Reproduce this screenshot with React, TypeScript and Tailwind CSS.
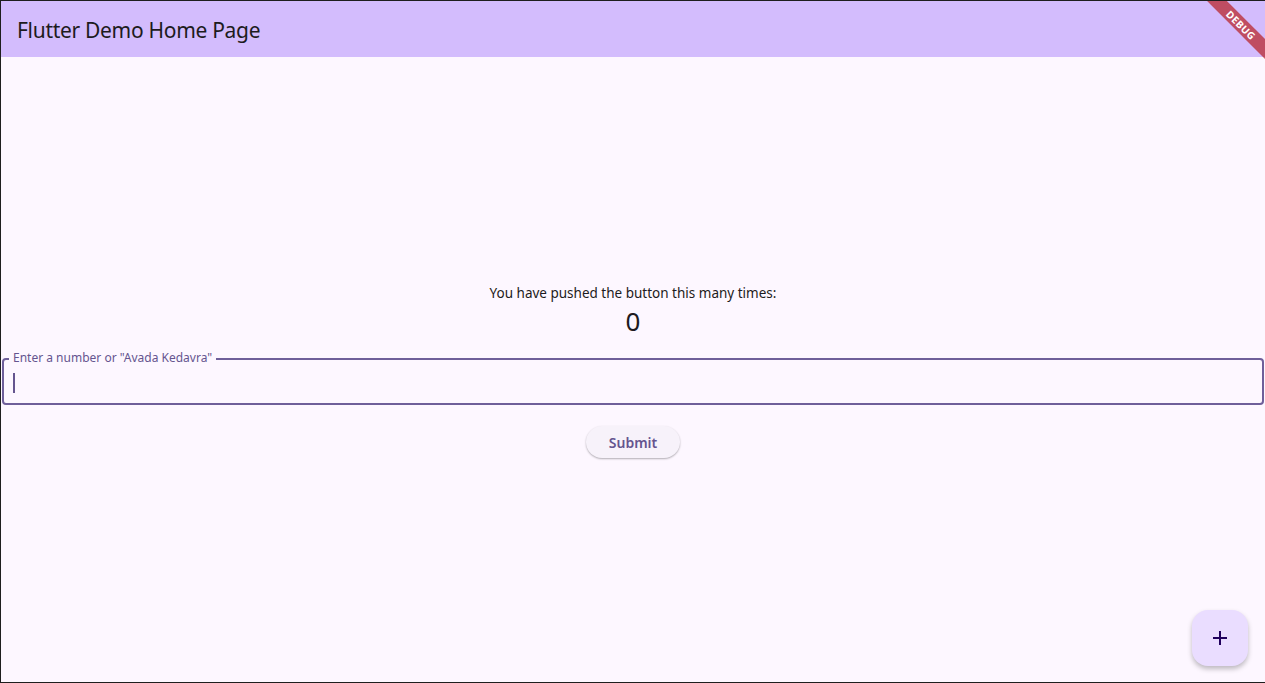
export default function App() {
  return (
    <main
      className="relative flex h-[683px] w-[1265px] flex-col overflow-hidden border-b border-l border-t border-[#1e1e1e] bg-[#fdf7ff]"
      style={{ fontFamily: '"Noto Sans", "Open Sans", sans-serif' }}
    >
      {/* App bar */}
      <header className="flex h-[56px] shrink-0 items-center bg-[#d3bcfd] px-4 pt-[3px]">
        <h1 className="text-[21px] leading-none tracking-[-0.3px] text-[#1d1b20]">Flutter Demo Home Page</h1>
      </header>

      {/* Debug banner */}
      <div className="pointer-events-none absolute right-0 top-0 h-[80px] w-[80px] overflow-hidden">
        <div className="absolute left-[2px] top-[17px] flex h-[14px] w-[108px] rotate-45 items-center justify-center bg-[#b71c1cb0]">
          <span className="text-[10px] font-bold leading-none tracking-[0.4px] text-white">DEBUG</span>
        </div>
      </div>

      {/* Body */}
      <section className="flex flex-1 flex-col items-center pt-[227px]">
        <p className="text-[13.5px] leading-[18px] text-[#1d1b20]">You have pushed the button this many times:</p>
        <p className="mt-[3px] text-[26px] leading-[32px] text-[#1d1b20]">0</p>

        <div className="relative mt-[21px] h-[47px] w-[1262px] rounded-[4px] border-2 border-[#6f5f9a]">
          <span className="absolute left-[5px] top-[-10px] bg-[#fdf7ff] px-[4px] text-[12px] leading-[16px] text-[#65558f]">
            Enter a number or "Avada Kedavra"
          </span>
          <div className="absolute left-[9px] top-[13px] h-[20px] w-[2px] bg-[#65558f]" />
        </div>

        <button className="mt-[21px] h-[32px] w-[94px] rounded-full bg-[#f7f2fa] text-[14px] font-semibold text-[#65558f] shadow-[0_1px_2px_rgba(0,0,0,0.3)]">
          Submit
        </button>
      </section>

      {/* FAB */}
      <button className="absolute bottom-[16px] right-[17px] flex h-[56px] w-[56px] items-center justify-center rounded-[16px] bg-[#eaddff] shadow-[0_3px_5px_rgba(0,0,0,0.25)]">
        <svg width="24" height="24" viewBox="0 0 24 24" fill="none" stroke="#21005d" strokeWidth="2">
          <path d="M12 5v14M5 12h14" />
        </svg>
      </button>
    </main>
  );
}
